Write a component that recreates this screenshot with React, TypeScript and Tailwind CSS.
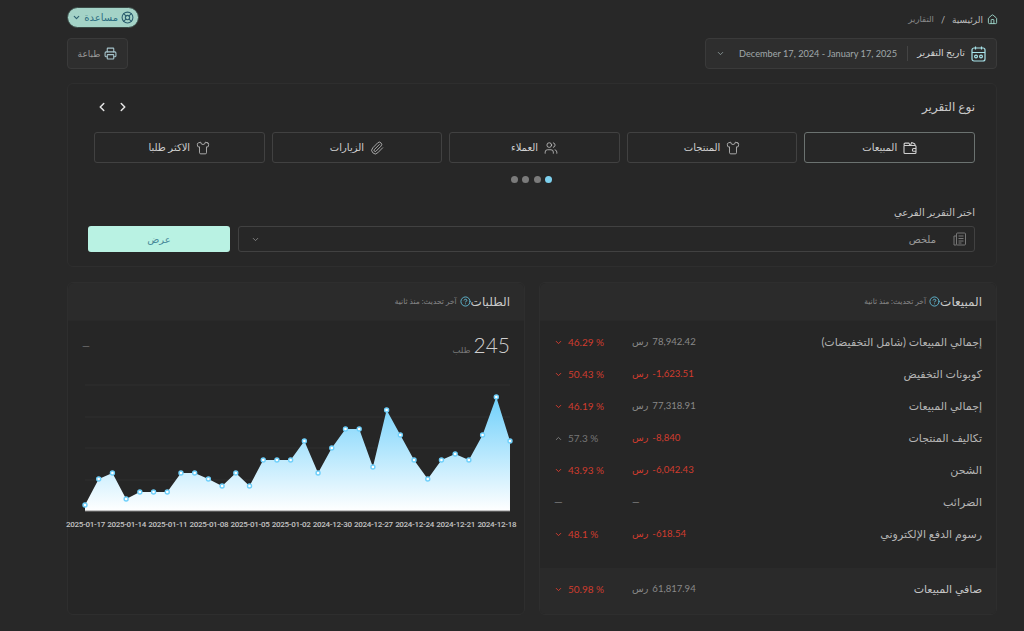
import { ChevronDown, ChevronLeft, ChevronRight, ChevronUp, CircleHelp, House, LifeBuoy, Paperclip, Printer, Shirt, Users } from "lucide-react";

const font = "font-['Lato','DejaVu_Sans',sans-serif]";

function SalesIcon({ size }: { size: number; strokeWidth?: number }) {
  return (
    <svg width={size} height={size} viewBox="0 0 14 14" fill="none" stroke="currentColor" strokeWidth="1.1" strokeLinejoin="round">
      <path d="M1 4.5v7a1 1 0 0 0 1 1h10a1 1 0 0 0 1-1v-6a1 1 0 0 0-1-1H2.2A1.2 1.2 0 0 1 1 3.3 1.2 1.2 0 0 1 2.2 2.1H6l1 2.4" />
      <path d="M7.5 4.5 8.6 1.6l3 1.2.7 1.7" />
      <path d="M13 7.5h-2.2a1.4 1.4 0 0 0 0 2.8H13" />
    </svg>
  );
}

const tabs = [
  { label: "المبيعات", icon: SalesIcon, active: true },
  { label: "المنتجات", icon: Shirt },
  { label: "العملاء", icon: Users },
  { label: "الزيارات", icon: Paperclip },
  { label: "الاكثر طلبا", icon: Shirt },
];

const rows = [
  { label: "إجمالي المبيعات (شامل التخفيضات)", value: "78,942.42", pct: "46.29 %" },
  { label: "كوبونات التخفيض", value: "-1,623.51", pct: "50.43 %", neg: true },
  { label: "إجمالي المبيعات", value: "77,318.91", pct: "46.19 %" },
  { label: "تكاليف المنتجات", value: "-8,840", pct: "57.3 %", neg: true, up: true },
  { label: "الشحن", value: "-6,042.43", pct: "43.93 %", neg: true },
  { label: "الضرائب" },
  { label: "رسوم الدفع الإلكتروني", value: "-618.54", pct: "48.1 %", neg: true },
];

const ys = [505, 479, 473, 499, 492, 492, 492, 473, 473, 479, 486, 473, 486, 460, 460, 460, 441, 473, 448, 429, 429, 467, 410, 435, 460, 479, 460, 454, 460, 435, 397, 441];
const points = ys.map((y, i) => [85 + i * 13.71, y]);
const line = points.map(([x, y]) => `${x},${y}`).join(" ");
const dates = ["2025-01-17", "2025-01-14", "2025-01-11", "2025-01-08", "2025-01-05", "2025-01-02", "2024-12-30", "2024-12-27", "2024-12-24", "2024-12-21", "2024-12-18"];

function Change({ pct, up }: { pct?: string; up?: boolean }) {
  if (!pct) return <span className="text-[#777]">—</span>;
  const Icon = up ? ChevronUp : ChevronDown;
  return (
    <span dir="ltr" className={`flex items-center gap-[5px] text-[10px] ${up ? "text-[#777]" : "text-[#d03c2e]"}`}>
      <Icon size={9} strokeWidth={2.6} />
      {pct}
    </span>
  );
}

function CardHeader({ title }: { title: string }) {
  return (
    <div className="flex h-[38px] items-center rounded-t-md border-b border-[#292929] bg-[#2b2b2b] px-[14px]">
      <span className="text-[12px] text-[#c9c9c9]">{title}</span>
      <CircleHelp size={11} strokeWidth={2} className="text-[#62bcd6]" />
      <span className="mr-[3px] text-[7.5px] text-[#888]">آخر تحديث: منذ ثانية</span>
    </div>
  );
}

export default function App() {
  return (
    <div dir="rtl" className={`${font} h-[631px] overflow-hidden bg-[#282828] pl-[67px] pr-[27px]`}>
      <div className="flex h-[38px] items-start justify-between pt-[7px]">
        <div className="flex h-[13px] items-center gap-1 pt-3 text-[9px] text-[#bbb]">
          <House size={11} className="-mr-px text-[#9fd8cc]" />
          <span>الرئيسية</span>
          <span className="mx-[3px]">/</span>
          <span className="text-[8.5px] text-[#888]">التقارير</span>
        </div>
        <button className="flex h-[21px] w-[72px] items-center gap-[3px] rounded-full border border-[#3a4a46] bg-[#a4d3c7] px-1 text-[10px] text-[#2e6f82]">
          <LifeBuoy size={13} className="text-[#2c5f6f]" />
          مساعدة
          <ChevronDown size={9} strokeWidth={3} className="text-[#2c5f6f]" />
        </button>
      </div>

      <div className="flex items-center justify-between">
        <div className="flex h-[31px] w-[292px] items-center rounded border border-[#3a3a3a] bg-[#2e2e2e] px-[10px]">
          <svg width="15" height="16" viewBox="0 0 15 16" fill="none" stroke="#a8e3ea" strokeWidth="1.2">
            <rect x="1" y="2" width="13" height="13" rx="2" />
            <path d="M1 6.5h13M4.5 .5v3M10.5 .5v3" />
            <circle cx="5" cy="10.5" r="1.4" />
            <circle cx="10" cy="10.5" r="1.4" />
          </svg>
          <span className="mr-[6px] w-[47px] whitespace-nowrap text-[9.5px] text-[#d6d6d6]">تاريخ التقرير</span>
          <span className="mx-[10px] h-[15px] w-px bg-[#444]" />
          <span dir="ltr" className="text-[9.2px] text-[#a0a8aa]">December 17, 2024 - January 17, 2025</span>
          <ChevronDown size={9} strokeWidth={2} className="mr-auto text-[#9aa]" />
        </div>
        <button className="flex h-[31px] w-[61px] items-center justify-center gap-1 rounded border border-[#3a3a3a] bg-[#2e2e2e] text-[9px] text-[#999]">
          <Printer size={13} className="text-[#a6c4cc]" />
          طباعة
        </button>
      </div>

      <section className="mt-[14px] h-[184px] rounded-md border border-[#2e2e2e] bg-[#272727] pl-5 pr-[21px] pt-[14px]">
        <div className="flex h-[17px] items-center justify-between pl-[7px]">
          <h2 className="text-[12px] text-[#c9c9c9]">نوع التقرير</h2>
          <div className="flex items-center gap-[7px] text-[#e5e5e5]">
            <ChevronRight size={14} strokeWidth={2.6} />
            <ChevronLeft size={14} strokeWidth={2.6} />
          </div>
        </div>
        <div className="mt-[17px] grid grid-cols-5 gap-[7px] pl-[6px]">
          {tabs.map((tab) => (
            <div key={tab.label} className={`flex h-[31px] items-center justify-center gap-1.5 rounded-[3px] border text-[10px] text-[#d0d0d0] ${tab.active ? "border-[#6b7270] text-[#bfe6dc]" : "border-[#414141]"}`}>
              <tab.icon size={14} strokeWidth={1.3} />
              {tab.label}
            </div>
          ))}
        </div>
        <div className="mt-[13px] flex justify-center gap-[4.3px]">
          <span className="size-[7px] rounded-full bg-[#7ed1ee]" />
          <span className="size-[7px] rounded-full bg-[#7b7b7b]" />
          <span className="size-[7px] rounded-full bg-[#7b7b7b]" />
          <span className="size-[7px] rounded-full bg-[#7b7b7b]" />
        </div>
        <p className="mt-[22px] text-[10px] leading-[15px] text-[#c4c4c4]">اختر التقرير الفرعي</p>
        <div className="mt-[6px] flex gap-2">
          <div className="flex h-[26px] flex-1 items-center rounded-[3px] border border-[#414141] pl-[12px] pr-[8px] text-[10px] text-[#999]">
            <svg width="13" height="14" viewBox="0 0 13 14" fill="none" stroke="#777" strokeWidth="1">
              <rect x="3.5" y="1" width="9" height="12" rx="1" />
              <path d="M3.5 4H1v9h2.5M5.5 4h5M5.5 6.5h5M5.5 9h5M5.5 11h3" />
            </svg>
            <span className="mr-[17px]">ملخص</span>
            <ChevronDown size={9} className="mr-auto text-[#999]" />
          </div>
          <button className="h-[26px] w-[142px] rounded-[3px] bg-[#b9f2e3] text-[10px] text-[#4a8a9a]">عرض</button>
        </div>
      </section>

      <div className="mt-[15px] grid h-[333px] grid-cols-2 gap-[14px]">
        <section className="flex flex-col overflow-hidden rounded-md border border-[#2e2e2e] bg-[#262626]">
          <CardHeader title="المبيعات" />
          <div className="flex-1 pt-[5px]">
            {rows.map((row) => (
              <div key={row.label} className="flex h-[32.1px] items-center px-[14px] text-[11px] text-[#b5b5b5]">
                <span className="flex-1">{row.label}</span>
                <span className={`flex w-[76px] justify-end gap-1 text-[9.6px] ${row.neg ? "text-[#d03c2e]" : "text-[#888]"}`}>
                  {row.value ? <><span dir="ltr">{row.value}</span><span>رس</span></> : <span>—</span>}
                </span>
                <span className="mr-[11px] flex w-[67px] justify-end"><Change pct={row.pct} up={row.up} /></span>
              </div>
            ))}
          </div>
          <div className="flex h-[46px] items-center bg-[#2a2a2a] px-[14px] pb-[4px] text-[11px] text-[#c4c4c4]">
            <span className="flex-1">صافي المبيعات</span>
            <span className="flex w-[76px] justify-end gap-1 text-[9.6px] text-[#888]"><span dir="ltr">61,817.94</span><span>رس</span></span>
            <span className="mr-[11px] flex w-[67px] justify-end"><Change pct="50.98 %" /></span>
          </div>
        </section>

        <section className="flex flex-col rounded-md border border-[#2e2e2e] bg-[#262626]">
          <CardHeader title="الطلبات" />
          <div className="flex items-center justify-between px-[14px] pt-[10px]">
            <div className="flex items-baseline gap-[3px]">
              <span className="text-[21px] font-light leading-[28px] text-[#cfcfcf]">245</span>
              <span className="text-[8.5px] text-[#777]">طلب</span>
            </div>
            <span className="text-[10px] text-[#777]">—</span>
          </div>
          <svg width="456" height="165" viewBox="68 370 456 165" className="mt-[11px] block shrink-0 overflow-visible">
            <defs>
              <linearGradient id="area" x1="0" y1="0" x2="0" y2="1">
                <stop offset="0" stopColor="#6fd0fb" />
                <stop offset="1" stopColor="#ffffff" />
              </linearGradient>
            </defs>
            {[385, 417, 448, 480].map((y) => (
              <line key={y} x1="85" x2="510" y1={y} y2={y} stroke="#2e2e2e" />
            ))}
            <polygon points={`85,511 ${line} 510,511`} fill="url(#area)" />
            <line x1="85" x2="510" y1="511" y2="511" stroke="#888" />
            {points.map(([x, y]) => (
              <circle key={x} cx={x} cy={y} r="2" fill="#fff" stroke="#6fd0fb" strokeWidth="1.4" />
            ))}
            {dates.map((d, i) => (
              <text key={d} x={85.5 + i * 41.13} y="527" textAnchor="middle" fontSize="8" fontFamily="Roboto" fontWeight="500" letterSpacing="-0.3" fill="#c4c4c4">{d}</text>
            ))}
          </svg>
        </section>
      </div>
    </div>
  );
}
